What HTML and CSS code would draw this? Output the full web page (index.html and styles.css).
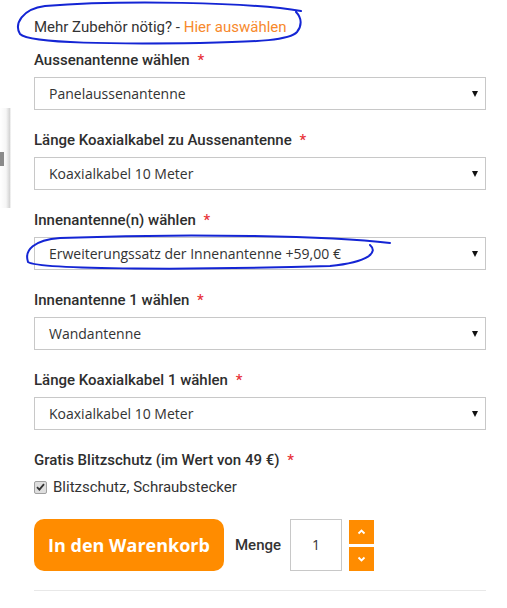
FILE: index.html
```html
<!DOCTYPE html>
<html lang="de">

<head>
    <meta charset="UTF-8">
    <title>Zubehör wählen</title>
    <link rel="stylesheet" href="styles.css">
</head>

<body>
    <div class="edge"><span class="edge-icon"></span></div>

    <main class="product-form">
        <p class="intro">Mehr Zubehör nötig? - <a href="#">Hier auswählen</a></p>

        <div class="field">
            <label>Aussenantenne wählen <span class="req">*</span></label>
            <div class="select"><span>Panelaussenantenne</span></div>
        </div>

        <div class="field">
            <label>Länge Koaxialkabel zu Aussenantenne <span class="req">*</span></label>
            <div class="select"><span>Koaxialkabel 10 Meter</span></div>
        </div>

        <div class="field">
            <label>Innenantenne(n) wählen <span class="req">*</span></label>
            <div class="select"><span>Erweiterungssatz der Innenantenne +59,00 €</span></div>
        </div>

        <div class="field">
            <label>Innenantenne 1 wählen <span class="req">*</span></label>
            <div class="select"><span>Wandantenne</span></div>
        </div>

        <div class="field">
            <label>Länge Koaxialkabel 1 wählen <span class="req">*</span></label>
            <div class="select"><span>Koaxialkabel 10 Meter</span></div>
        </div>

        <div class="field">
            <label>Gratis Blitzschutz (im Wert von 49 €) <span class="req">*</span></label>
            <div class="checkbox-row">
                <span class="check">
                    <svg width="9" height="8" viewBox="0 0 9 8"><path d="M1 4.2 L3.4 6.6 L8 1.2" fill="none" stroke="#333" stroke-width="1.8"/></svg>
                </span>
                Blitzschutz, Schraubstecker
            </div>
        </div>

        <div class="cart-row">
            <button class="cart-btn">In den Warenkorb</button>
            <span class="qty-label">Menge</span>
            <div class="qty">1</div>
            <div class="spin">
                <span class="spin-btn">
                    <svg width="9" height="6" viewBox="0 0 9 6"><path d="M1.5 4.5 L4.5 1.5 L7.5 4.5" fill="none" stroke="#fff" stroke-width="1.8"/></svg>
                </span>
                <span class="spin-btn">
                    <svg width="9" height="6" viewBox="0 0 9 6"><path d="M1.5 1.5 L4.5 4.5 L7.5 1.5" fill="none" stroke="#fff" stroke-width="1.8"/></svg>
                </span>
            </div>
        </div>

        <hr>
    </main>

    <!-- pen marks drawn on top of the screenshot -->
    <svg class="marks" width="507" height="608" viewBox="0 0 507 608">
        <path d="M301 11 C 250 2, 120 0, 45 6 C 22 9, 14 24, 20 34 C 30 44, 120 44, 200 43 C 260 42, 290 40, 297 32 C 302 26, 302 18, 296 12" />
        <path d="M390 243 C 330 236, 190 233, 60 238 C 34 240, 24 250, 28 262 C 40 270, 200 270, 330 266 C 370 262, 378 252, 370 245" />
    </svg>
</body>

</html>
```

FILE: styles.css
```css
/* General Styles */
body {
    margin: 0;
    padding: 0;
    background-color: #fff;
    font-family: Roboto, Arial, sans-serif;
    color: #333;
    position: relative;
    width: 507px;
    height: 608px;
    overflow: hidden;
}

.edge {
    position: absolute;
    left: 0;
    top: 108px;
    width: 11px;
    height: 100px;
    background: linear-gradient(to right, #fff 0, #f6f6f6 55%, #d4d4d4 88%, #fff 100%);
}

.edge-icon {
    position: absolute;
    left: 0;
    top: 44px;
    width: 4px;
    height: 14px;
    background: #8a8a8a;
}

.product-form {
    width: 452px;
    padding: 17px 0 0 34px;
}

.intro {
    margin: 0 0 13px;
    font-size: 15px;
    line-height: 20px;
    color: #333;
}

.intro a {
    color: #f7892c;
    text-decoration: none;
}

/* Fields */
.field {
    margin-bottom: 20px;
}

.field label {
    display: block;
    font-size: 15px;
    font-weight: 500;
    line-height: 20px;
    margin-bottom: 7px;
    color: #2e2e2e;
}

.req {
    color: #e8333a;
    margin-left: 4px;
}

.select {
    position: relative;
    height: 31px;
    border: 1px solid #c8c8c8;
    padding-left: 14px;
    font-family: "Open Sans", Arial, sans-serif;
    font-size: 14px;
    line-height: 31px;
    color: #333;
}

.select::after {
    content: "";
    position: absolute;
    right: 7px;
    top: 13px;
    border-left: 3.5px solid transparent;
    border-right: 3.5px solid transparent;
    border-top: 6px solid #111;
}

.checkbox-row {
    display: flex;
    align-items: center;
    gap: 6px;
    font-size: 15px;
    line-height: 20px;
}

.check {
    display: inline-flex;
    align-items: center;
    justify-content: center;
    width: 11px;
    height: 11px;
    border: 1px solid #a0a0a0;
    border-radius: 2px;
    background: #dedede;
}

/* Cart row */
.cart-row {
    display: flex;
    align-items: center;
    margin-top: 22px;
}

.cart-btn {
    width: 190px;
    height: 52px;
    border: none;
    border-radius: 10px;
    background-color: #ff8c00;
    color: #fff;
    font-family: "Open Sans", Arial, sans-serif;
    font-size: 18px;
    font-weight: 700;
    padding: 0;
}

.qty-label {
    margin-left: 11px;
    font-size: 15px;
    font-weight: 500;
}

.qty {
    width: 50px;
    height: 50px;
    margin-left: 9px;
    border: 1px solid #c8c8c8;
    text-align: center;
    line-height: 50px;
    font-family: "Open Sans", Arial, sans-serif;
    font-size: 14px;
}

.spin {
    display: flex;
    flex-direction: column;
    gap: 3px;
    margin-left: 7px;
}

.spin-btn {
    display: flex;
    align-items: center;
    justify-content: center;
    width: 25px;
    height: 24px;
    background-color: #ff8c00;
}

hr {
    border: none;
    border-top: 1px solid #e8e8e8;
    margin: 19px 0 0;
}

.marks {
    position: absolute;
    left: 0;
    top: 0;
    pointer-events: none;
}

.marks path {
    fill: none;
    stroke: #1425d4;
    stroke-width: 2;
    stroke-linecap: round;
}
```
